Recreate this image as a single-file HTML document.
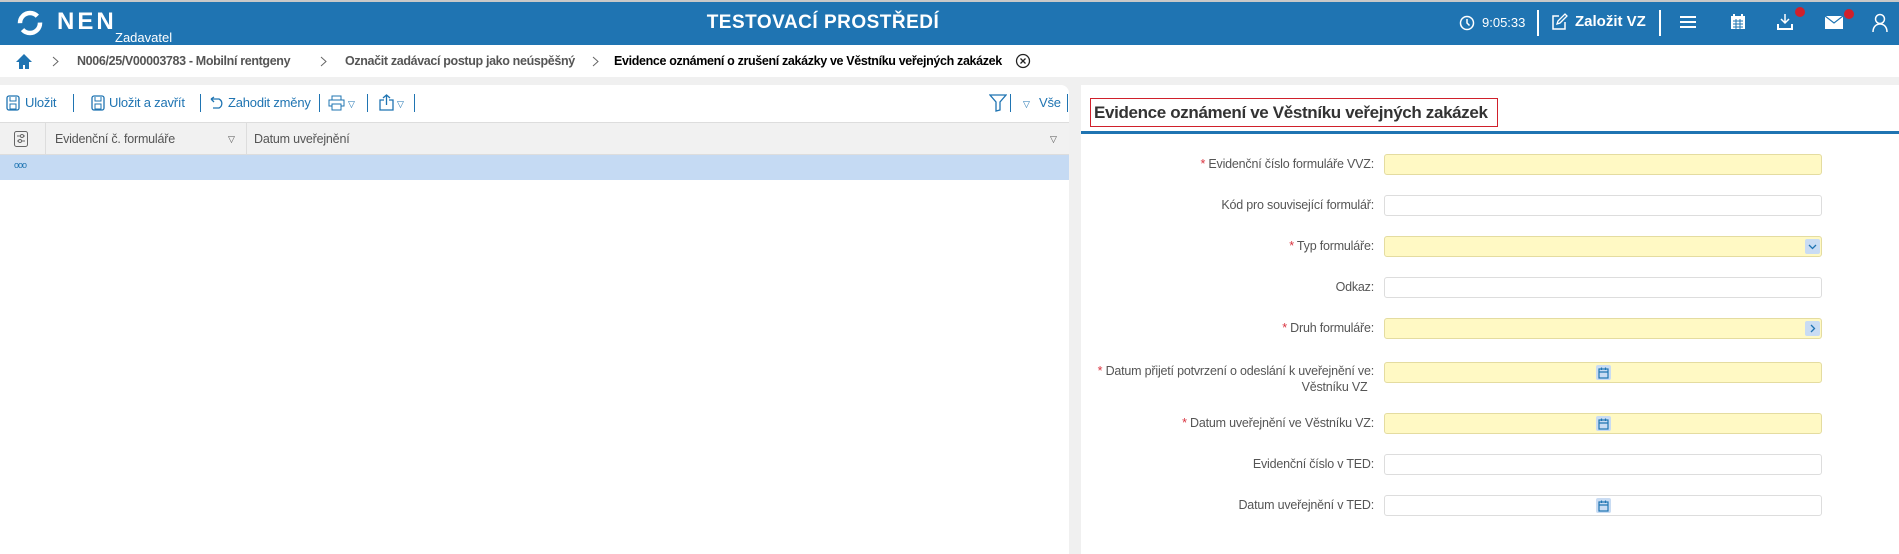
<!DOCTYPE html>
<html><head><meta charset="utf-8"><style>
*{box-sizing:border-box;margin:0;padding:0}
body{width:1899px;height:554px;overflow:hidden;background:#f0f0f0;font-family:"Liberation Sans",sans-serif;position:relative;color:#333}
.a{position:absolute}
#hdr{left:0;top:0;width:1899px;height:45px;background:#1f74b2;border-top:2px solid #c8c8c8}
.w{color:#fff}
#bc{left:0;top:45px;width:1899px;height:32px;background:#fff;font-size:12.5px;font-weight:bold;color:#555;letter-spacing:-0.35px}
#lp{left:0;top:85px;width:1069px;height:469px;background:#fff;border-top-right-radius:8px}
#rp{left:1081px;top:85px;width:818px;height:469px;background:#fff}
.tb{font-size:13px;color:#1f74b2;top:10px;letter-spacing:-0.2px}
.sep{width:1px;height:18px;background:#1f74b2;top:9px}
.lbl{font-size:12.5px;color:#555;text-align:right;width:320px;left:1054px;letter-spacing:-0.2px}
.lbl b{color:#d9333f;font-weight:normal}
.in{left:1384px;width:438px;height:21px;border:1px solid #ddd;border-radius:3px;background:#fff}
.y{background:#fff9c4;border-color:#e4dca0}
.cal{left:211px;top:2px;width:15px;height:15px;background:#c9dcf3;border-radius:2px}
</style></head><body>
<div id="hdr" class="a">
 <svg class="a" style="left:17px;top:8px" width="26" height="26" viewBox="0 0 26 26"><circle cx="13" cy="13" r="10" fill="none" stroke="#fff" stroke-width="4.5" stroke-dasharray="24 7"/></svg>
 <div class="a w" style="left:57px;top:6px;font-size:24px;font-weight:bold;letter-spacing:3px">NEN</div>
 <div class="a w" style="left:115px;top:28px;font-size:13px">Zadavatel</div>
 <div class="a w" style="left:700px;top:10px;width:246px;text-align:center;font-size:19px;font-weight:bold;letter-spacing:0.5px">TESTOVACÍ PROSTŘEDÍ</div>
 <svg class="a" style="left:1459px;top:13px" width="16" height="16"><circle cx="8" cy="8" r="6.5" fill="none" stroke="#fff" stroke-width="1.5"/><path d="M8 4v4l2.5 2.5" stroke="#fff" fill="none" stroke-width="1.5"/></svg>
 <div class="a w" style="left:1482px;top:13px;font-size:13px">9:05:33</div>
 <div class="a" style="left:1537px;top:8px;width:2px;height:26px;background:#fff"></div>
 <svg class="a" style="left:1550px;top:11px" width="18" height="18"><path d="M9 3H3v13h12V9" fill="none" stroke="#fff" stroke-width="1.5"/><path d="M7 11l1-3 7-7 2 2-7 7z" fill="none" stroke="#fff" stroke-width="1.3"/></svg>
 <div class="a w" style="left:1575px;top:11px;font-size:15px;font-weight:bold">Založit VZ</div>
 <div class="a" style="left:1659px;top:8px;width:2px;height:26px;background:#fff"></div>
 <svg class="a" style="left:1680px;top:13px" width="16" height="14"><path d="M0 2h16M0 7h16M0 12h16" stroke="#fff" stroke-width="2"/></svg>
 <svg class="a" style="left:1730px;top:11px" width="16" height="17"><rect x="1" y="3" width="14" height="13" fill="#fff"/><path d="M4 1v3M12 1v3" stroke="#fff" stroke-width="2"/><path d="M3 8h10M3 11h10M3 14h10M6 6v10M10 6v10" stroke="#1f74b2" stroke-width="1"/></svg>
 <svg class="a" style="left:1776px;top:11px" width="18" height="18"><path d="M9 1v9M5 6l4 4 4-4" stroke="#fff" fill="none" stroke-width="1.5"/><path d="M2 11v5h14v-5" stroke="#fff" fill="none" stroke-width="2"/></svg>
 <div class="a" style="left:1795px;top:5px;width:10px;height:10px;border-radius:50%;background:#d0202b"></div>
 <svg class="a" style="left:1825px;top:14px" width="18" height="13"><rect x="0" y="0" width="18" height="13" fill="#fff"/><path d="M0 0l9 7 9-7" stroke="#1f74b2" fill="none" stroke-width="1.2"/></svg>
 <div class="a" style="left:1844px;top:7px;width:10px;height:10px;border-radius:50%;background:#d0202b"></div>
 <svg class="a" style="left:1872px;top:11px" width="16" height="19"><circle cx="8" cy="6" r="4.5" fill="none" stroke="#fff" stroke-width="1.5"/><path d="M1 19c0-5 3-8 7-8s7 3 7 8" fill="none" stroke="#fff" stroke-width="1.5"/></svg>
</div>
<div id="bc" class="a">
 <svg class="a" style="left:15px;top:8px" width="18" height="16"><path d="M9 1L1 9h3v7h4v-4h2v4h4V9h3z" fill="#1f74b2"/></svg>
 <svg class="a" style="left:52px;top:11px" width="7" height="11"><path d="M1 1l5 4.5L1 10" fill="none" stroke="#666"/></svg>
 <div class="a" style="left:77px;top:9px">N006/25/V00003783 - Mobilní rentgeny</div>
 <svg class="a" style="left:320px;top:11px" width="7" height="11"><path d="M1 1l5 4.5L1 10" fill="none" stroke="#666"/></svg>
 <div class="a" style="left:345px;top:9px">Označit zadávací postup jako neúspěšný</div>
 <svg class="a" style="left:592px;top:11px" width="7" height="11"><path d="M1 1l5 4.5L1 10" fill="none" stroke="#666"/></svg>
 <div class="a" style="left:614px;top:9px;color:#000">Evidence oznámení o zrušení zakázky ve Věstníku veřejných zakázek</div>
 <svg class="a" style="left:1015px;top:8px" width="16" height="16"><circle cx="8" cy="8" r="6.5" fill="none" stroke="#222" stroke-width="1.3"/><path d="M5.5 5.5l5 5M10.5 5.5l-5 5" stroke="#222" stroke-width="1.3"/></svg>
</div>
<div id="lp" class="a">
 <svg class="a" style="left:6px;top:10px" width="14" height="16"><rect x="1" y="1" width="12" height="14" rx="2" fill="none" stroke="#1f74b2" stroke-width="1.3"/><rect x="4" y="9" width="6" height="5" fill="none" stroke="#1f74b2"/><path d="M4 2v4h6V2" fill="none" stroke="#1f74b2"/></svg>
 <div class="a tb" style="left:25px">Uložit</div>
 <div class="a sep" style="left:73px"></div>
 <svg class="a" style="left:91px;top:10px" width="14" height="16"><rect x="1" y="1" width="12" height="14" rx="2" fill="none" stroke="#1f74b2" stroke-width="1.3"/><rect x="4" y="9" width="6" height="5" fill="none" stroke="#1f74b2"/><path d="M4 2v4h6V2" fill="none" stroke="#1f74b2"/></svg>
 <div class="a tb" style="left:109px">Uložit a zavřít</div>
 <div class="a sep" style="left:200px"></div>
 <svg class="a" style="left:209px;top:11px" width="17" height="13"><path d="M2 3h8a5 5 0 010 9H4M2 3l3-2M2 3l3 3" fill="none" stroke="#1f74b2" stroke-width="1.3"/></svg>
 <div class="a tb" style="left:228px">Zahodit změny</div>
 <div class="a sep" style="left:319px"></div>
 <svg class="a" style="left:328px;top:10px" width="17" height="16"><rect x="4" y="1" width="9" height="4" fill="none" stroke="#1f74b2"/><rect x="1" y="5" width="15" height="6" fill="none" stroke="#1f74b2"/><rect x="4" y="9" width="9" height="6" fill="#fff" stroke="#1f74b2"/></svg>
 <div class="a tb" style="left:348px;font-size:9px;top:14px">▽</div>
 <div class="a sep" style="left:367px"></div>
 <svg class="a" style="left:379px;top:9px" width="15" height="17"><path d="M5 6H1v10h13V6h-4M7.5 11V1M4 4l3.5-3 3.5 3" fill="none" stroke="#1f74b2" stroke-width="1.3"/></svg>
 <div class="a tb" style="left:397px;font-size:9px;top:14px">▽</div>
 <div class="a sep" style="left:414px"></div>
 <svg class="a" style="left:989px;top:9px" width="18" height="18"><path d="M1 1h16l-6 7v8l-4 1V8z" fill="none" stroke="#1f74b2" stroke-width="1.3"/></svg>
 <div class="a sep" style="left:1010px"></div>
 <div class="a tb" style="left:1023px;font-size:9px;top:14px">▽</div>
 <div class="a tb" style="left:1039px">Vše</div>
 <div class="a sep" style="left:1067px"></div>
 <div class="a" style="left:0;top:37px;width:1069px;height:33px;background:#f1f1f1;border-top:1px solid #ddd;border-bottom:1px solid #ddd"></div>
 <div class="a" style="left:45px;top:37px;width:1px;height:33px;background:#ddd"></div>
 <div class="a" style="left:246px;top:37px;width:1px;height:33px;background:#ddd"></div>
 <svg class="a" style="left:14px;top:46px" width="14" height="16"><rect x="0.5" y="0.5" width="13" height="15" rx="2" fill="none" stroke="#666"/><path d="M3 5h8M3 10h8" stroke="#666"/><circle cx="8" cy="5" r="1.5" fill="#fff" stroke="#666"/><circle cx="6" cy="10" r="1.5" fill="#fff" stroke="#666"/></svg>
 <div class="a" style="left:55px;top:47px;font-size:12.5px;color:#555;letter-spacing:-0.2px">Evidenční č. formuláře</div>
 <div class="a" style="left:228px;top:49px;font-size:9px;color:#555">▽</div>
 <div class="a" style="left:254px;top:47px;font-size:12.5px;color:#555;letter-spacing:-0.2px">Datum uveřejnění</div>
 <div class="a" style="left:1050px;top:49px;font-size:9px;color:#555">▽</div>
 <div class="a" style="left:0;top:70px;width:1069px;height:25px;background:#c5daf3"></div>
 <div class="a" style="left:14px;top:75px;font-size:9px;color:#1f74b2;letter-spacing:-1px">ooo</div>
</div>
<div id="rp" class="a">
 <div class="a" style="left:9px;top:13px;width:408px;height:29px;border:1px solid #d0202b"></div>
 <div class="a" style="left:13px;top:18px;font-size:17px;font-weight:bold;color:#333;letter-spacing:-0.35px">Evidence oznámení ve Věstníku veřejných zakázek</div>
 <div class="a" style="left:0;top:46px;width:818px;height:3px;background:#1f74b2"></div>
</div>
<div class="a lbl" style="top:157px"><b>*</b> Evidenční číslo formuláře VVZ:</div>
<div class="a in y" style="top:154px"></div>
<div class="a lbl" style="top:198px">Kód pro související formulář:</div>
<div class="a in" style="top:195px"></div>
<div class="a lbl" style="top:239px"><b>*</b> Typ formuláře:</div>
<div class="a in y" style="top:236px"><svg class="a" style="left:420px;top:2px" width="15" height="15"><rect width="15" height="15" rx="2" fill="#c9dcf3"/><path d="M4 6l3.5 3.5L11 6" fill="none" stroke="#1f74b2" stroke-width="1.3"/></svg></div>
<div class="a lbl" style="top:280px">Odkaz:</div>
<div class="a in" style="top:277px"></div>
<div class="a lbl" style="top:321px"><b>*</b> Druh formuláře:</div>
<div class="a in y" style="top:318px"><svg class="a" style="left:420px;top:2px" width="15" height="15"><rect width="15" height="15" rx="2" fill="#c9dcf3"/><path d="M6 4l3.5 3.5L6 11" fill="none" stroke="#1f74b2" stroke-width="1.3"/></svg></div>
<div class="a lbl" style="top:363px;line-height:16px;left:994px;width:380px"><b>*</b> Datum přijetí potvrzení o odeslání k uveřejnění ve:<br>Věstníku VZ&nbsp;&nbsp;</div>
<div class="a in y" style="top:362px"><svg class="a cal" width="15" height="15"><rect x="3" y="4" width="9" height="9" fill="none" stroke="#1f74b2" stroke-width="1.2"/><path d="M3 7h9M5.5 2.5v2.5M9.5 2.5v2.5" stroke="#1f74b2" stroke-width="1.2"/></svg></div>
<div class="a lbl" style="top:416px"><b>*</b> Datum uveřejnění ve Věstníku VZ:</div>
<div class="a in y" style="top:413px"><svg class="a cal" width="15" height="15"><rect x="3" y="4" width="9" height="9" fill="none" stroke="#1f74b2" stroke-width="1.2"/><path d="M3 7h9M5.5 2.5v2.5M9.5 2.5v2.5" stroke="#1f74b2" stroke-width="1.2"/></svg></div>
<div class="a lbl" style="top:457px">Evidenční číslo v TED:</div>
<div class="a in" style="top:454px"></div>
<div class="a lbl" style="top:498px">Datum uveřejnění v TED:</div>
<div class="a in" style="top:495px"><svg class="a cal" width="15" height="15"><rect x="3" y="4" width="9" height="9" fill="none" stroke="#1f74b2" stroke-width="1.2"/><path d="M3 7h9M5.5 2.5v2.5M9.5 2.5v2.5" stroke="#1f74b2" stroke-width="1.2"/></svg></div>
</body></html>
